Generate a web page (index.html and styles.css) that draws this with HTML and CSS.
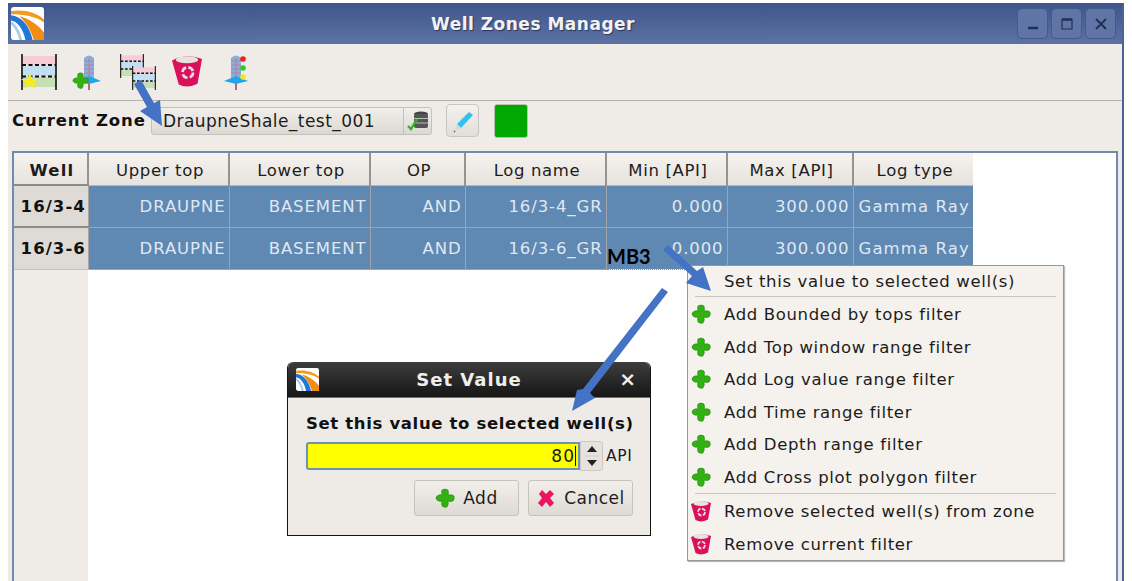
FILE: index.html
```html
<!DOCTYPE html>
<html lang="en">
	<head>
		<meta charset="UTF-8">
		<title>Well Zones Manager</title>
		<link rel="stylesheet" href="styles.css">
	</head>
	<body>
		<svg class="defs" width="0" height="0">
			<symbol id="logo" viewBox="0 0 32 32">
				<rect width="32" height="32" rx="3" fill="#fff"/>
				<path d="M0 4 C12 2 24 5 32 12 V15 C24 9 12 7 0 7Z" fill="#f59a1c"/>
				<path d="M8 9 C18 11 28 19 32 25 V32 H22 C20 24 15 15 8 9Z" fill="#f28c12"/>
				<path d="M0 8 C10 9 18 18 21 32 H14 C12 22 7 14 0 13Z" fill="#1f78d8"/>
				<path d="M0 14 C5 16 9 24 11 32 H8 C6 24 3 19 0 17Z" fill="#a8cdf0"/>
			</symbol>
			<symbol id="plus" viewBox="0 0 20 20">
				<path d="M7 2 Q10 0 13 2 Q14 5 13 7 Q17 6 19 8 Q20 11 18 13 Q15 14 13 13 Q14 16 12 19 Q9 20 7 18 Q6 15 7 13 Q4 14 2 12 Q0 10 2 8 Q5 6 7 7 Q6 4 7 2Z" fill="#33b014" stroke="#1f8a0c" stroke-width=".6"/>
			</symbol>
			<symbol id="bin" viewBox="0 0 20 22">
				<path d="M0 4 Q10 -1 20 3 L17 19.500 Q10 23 4.500 20Z" fill="#d9105a"/>
				<ellipse cx="10" cy="3.500" rx="7.500" ry="2.400" fill="#e6e2dc"/>
				<circle cx="10.500" cy="12" r="3.500" fill="none" stroke="#fbd6e4" stroke-width="1.800" stroke-dasharray="4 1.500"/>
			</symbol>
			<symbol id="tower" viewBox="0 0 28 36">
				<path d="M14 4 V36" stroke="#b9677f" stroke-width="2"/>
				<path d="M9 4 Q14 -1 19 4 V24 H9Z" fill="#7fb3dd"/>
				<path d="M9 7 H19 M9 11 H19 M9 15 H19 M9 19 H19 M14 4 V24" stroke="#c87a9c" stroke-width="1.200"/>
				<path d="M2 27 L14 22 L26 27 L14 30Z" fill="#22a5ea"/>
			</symbol>
			<symbol id="zones" viewBox="0 0 36 36">
				<rect x="1" y="2" width="34" height="9" fill="#f6cdd7"/>
				<rect x="1" y="12" width="34" height="10" fill="#c4dff2"/>
				<rect x="1" y="23" width="34" height="10" fill="#c4e0b4"/>
				<path d="M1 0 V36 M35 0 V36" stroke="#111" stroke-width="1.600"/>
				<path d="M1 11 H35 M1 22.500 H35" stroke="#111" stroke-width="2.200" stroke-dasharray="4 2.500"/>
			</symbol>
		</svg>

		<div class="window">
			<div class="titlebar">
				<svg class="title-logo"><use href="#logo"/></svg>
				<span class="title-text">Well Zones Manager</span>
				<div class="wm-buttons">
					<div class="wm-btn"><svg width="16" height="16" viewBox="0 0 16 16"><path d="M3 12 H13" stroke="#1f2f55" stroke-width="2.500"/></svg></div>
					<div class="wm-btn"><svg width="16" height="16" viewBox="0 0 16 16"><path d="M3 3.500 H13 V13 H3Z" fill="none" stroke="#1f2f55" stroke-width="1.200"/><path d="M3 3.500 H13" stroke="#1f2f55" stroke-width="2.500"/></svg></div>
					<div class="wm-btn"><svg width="16" height="16" viewBox="0 0 16 16"><path d="M3 3 L13 13 M13 3 L3 13" stroke="#1f2f55" stroke-width="1.800"/></svg></div>
				</div>
			</div>

			<div class="toolbar">
				<svg class="tool tool-zones" viewBox="0 0 36 36">
					<use href="#zones"/>
					<path d="M9 19 L11.500 25 L18 25 L13 29 L15 35 L9 31.500 L3 35 L5 29 L0 25 L6.500 25Z" fill="#f9ec1e"/>
				</svg>
				<svg class="tool tool-tower" viewBox="0 0 30 36">
					<use href="#tower" x="3" width="28" height="36"/>
					<use href="#plus" y="18" width="17" height="17"/>
				</svg>
				<svg class="tool tool-copy" viewBox="0 0 36 36">
					<use href="#zones" width="24" height="24"/>
					<use href="#zones" x="12" y="12" width="24" height="24"/>
				</svg>
				<svg class="tool tool-bin"><use href="#bin"/></svg>
				<svg class="tool tool-lights" viewBox="0 0 28 36">
					<use href="#tower" width="28" height="36"/>
					<circle cx="21" cy="5" r="2.800" fill="#f02020"/>
					<circle cx="21" cy="14" r="2.800" fill="#2fc82f"/>
					<circle cx="21" cy="23" r="2.800" fill="#f2e52a"/>
				</svg>
			</div>

			<div class="zone-row">
				<span class="zone-label">Current Zone</span>
				<div class="combo">
					<span class="combo-text">DraupneShale_test_001</span>
					<div class="combo-btn">
						<svg width="24" height="24" viewBox="0 0 24 24">
							<ellipse cx="15" cy="5" rx="7" ry="2.500" fill="#444"/>
							<rect x="8" y="5" width="14" height="14" rx="2" fill="#555"/>
							<path d="M8 9.500 H22 M8 14 H22" stroke="#bbb" stroke-width="1"/>
							<path d="M2 17 L5 20 L11 10" fill="none" stroke="#32b51c" stroke-width="2.400"/>
						</svg>
					</div>
				</div>
				<button class="pen-btn">
					<svg width="24" height="24" viewBox="0 0 24 24">
						<path d="M6 15 L18 3 L22 6 L10 19Z" fill="#2cc3f3"/>
						<path d="M6 15 L10 19 L4 22Z" fill="#d8d8d8"/>
						<path d="M4 22 L3 23" stroke="#555" stroke-width="1.500"/>
					</svg>
				</button>
				<div class="swatch"></div>
			</div>

			<div class="table-frame">
				<div class="row-head-fill"></div>
				<table class="zones">
					<thead>
						<tr>
							<th class="well-col">Well</th>
							<th class="c-top">Upper top</th>
							<th class="c-top">Lower top</th>
							<th class="c-op">OP</th>
							<th class="c-top">Log name</th>
							<th class="c-min">Min [API]</th>
							<th class="c-max">Max [API]</th>
							<th class="c-type">Log type</th>
						</tr>
					</thead>
					<tbody>
						<tr>
							<th class="well-col">16/3-4</th>
							<td>DRAUPNE</td>
							<td>BASEMENT</td>
							<td>AND</td>
							<td>16/3-4_GR</td>
							<td>0.000</td>
							<td>300.000</td>
							<td class="left">Gamma Ray</td>
						</tr>
						<tr>
							<th class="well-col">16/3-6</th>
							<td>DRAUPNE</td>
							<td>BASEMENT</td>
							<td>AND</td>
							<td>16/3-6_GR</td>
							<td class="current">0.000</td>
							<td>300.000</td>
							<td class="left">Gamma Ray</td>
						</tr>
					</tbody>
				</table>
			</div>
		</div>

		<div class="menu">
			<div class="menu-item menu-head">Set this value to selected well(s)</div>
			<div class="menu-sep"></div>
			<div class="menu-item"><svg class="menu-icon"><use href="#plus"/></svg>Add Bounded by tops filter</div>
			<div class="menu-item"><svg class="menu-icon"><use href="#plus"/></svg>Add Top window range filter</div>
			<div class="menu-item"><svg class="menu-icon"><use href="#plus"/></svg>Add Log value range filter</div>
			<div class="menu-item"><svg class="menu-icon"><use href="#plus"/></svg>Add Time range filter</div>
			<div class="menu-item"><svg class="menu-icon"><use href="#plus"/></svg>Add Depth range filter</div>
			<div class="menu-item"><svg class="menu-icon"><use href="#plus"/></svg>Add Cross plot polygon filter</div>
			<div class="menu-sep"></div>
			<div class="menu-item"><svg class="menu-icon"><use href="#bin"/></svg>Remove selected well(s) from zone</div>
			<div class="menu-item"><svg class="menu-icon"><use href="#bin"/></svg>Remove current filter</div>
		</div>

		<div class="dialog">
			<div class="dialog-title">
				<svg class="dialog-logo"><use href="#logo"/></svg>
				<span class="dialog-name">Set Value</span>
				<span class="dialog-close">×</span>
			</div>
			<div class="dialog-body">
				<div class="dialog-label">Set this value to selected well(s)</div>
				<div class="value-row">
					<div class="value-input"><span>80</span><i class="caret"></i></div>
					<div class="spin">
						<svg width="20" height="30" viewBox="0 0 20 30">
							<path d="M5 11 L10 5 L15 11Z M5 19 L10 25 L15 19Z" fill="#222"/>
							<path d="M3 15 H17" stroke="#d2cec9"/>
						</svg>
					</div>
					<span class="unit">API</span>
				</div>
				<div class="dialog-buttons">
					<button class="btn btn-add"><svg width="20" height="20"><use href="#plus"/></svg>Add</button>
					<button class="btn btn-cancel">
						<svg width="20" height="20" viewBox="0 0 20 20"><path d="M3 6 L6 2 L10 6 L14 2 L18 6 L14 10 L18 15 L14 19 L10 14 L6 19 L2 15 L6 10Z" fill="#ee1560"/></svg>Cancel
					</button>
				</div>
			</div>
		</div>

		<span class="mb3">MB3</span>

		<svg class="arrows" width="1132" height="581" viewBox="0 0 1132 581">
			<g fill="#4472c4">
				<path d="M134 84 L141 80 L154 103 L160 100 L162 126 L140 111 L147 107Z"/>
				<path d="M663 250 L668 245 L697 271 L703 267 L711 291 L686 283 L692 276Z"/>
				<path d="M662 288 L668 292 L590 393 L595 398 L572 411 L577 390 L583 389Z"/>
			</g>
		</svg>
	</body>
</html>
```

FILE: styles.css
```css
* {
	box-sizing: border-box;
	margin: 0;
	padding: 0;
}

body {
	position: relative;
	width: 1132px;
	height: 581px;
	overflow: hidden;
	background-color: #fff;
	font-family: "DejaVu Sans", sans-serif;
	color: #1c1c1c;
}

.defs {
	position: absolute;
}

.window {
	display: flex;
	flex-direction: column;
	width: 1116px;
	height: 578px;
	margin: 3px 0 0 8px;
	background-color: #efebe7;
	border-right: 2px solid #4c6491;
}

/* title bar */
.titlebar {
	position: relative;
	display: flex;
	align-items: center;
	justify-content: center;
	flex-shrink: 0;
	height: 41px;
	padding-right: 64px;
	background: linear-gradient(#3f568c, #5c72a3);
}

.title-logo {
	position: absolute;
	left: 3px;
	top: 4px;
	width: 33px;
	height: 33px;
}

.title-text {
	font-size: 17px;
	font-weight: bold;
	letter-spacing: 0.5px;
	color: #f2f2f2;
	text-shadow: 1px 1px 1px #2a3a60;
}

.wm-buttons {
	position: absolute;
	right: 6px;
	top: 5px;
	display: flex;
	gap: 3px;
}

.wm-btn {
	display: flex;
	align-items: center;
	justify-content: center;
	width: 31px;
	height: 31px;
	background-color: #6075a6;
	border: 1px solid #44598c;
	border-radius: 5px;
}

/* toolbar */
.toolbar {
	display: flex;
	align-items: flex-start;
	flex-shrink: 0;
	height: 57px;
	padding: 10px 0 0 13px;
	border-bottom: 1px solid #b5b1ab;
}

.tool {
	flex-shrink: 0;
}

.tool-zones {
	width: 36px;
	height: 36px;
	margin-right: 15px;
}

.tool-tower {
	width: 30px;
	height: 36px;
	margin-right: 18px;
}

.tool-copy {
	width: 36px;
	height: 36px;
	margin-right: 16px;
}

.tool-bin {
	width: 30px;
	height: 34px;
	margin-right: 20px;
}

.tool-lights {
	width: 28px;
	height: 36px;
}

/* current zone */
.zone-row {
	display: flex;
	align-items: center;
	flex-shrink: 0;
	height: 39px;
	padding-left: 4px;
}

.zone-label {
	width: 139px;
	font-size: 16.500px;
	font-weight: bold;
	letter-spacing: 0.9px;
	color: #111;
}

.combo {
	display: flex;
	align-items: center;
	width: 281px;
	height: 28px;
	background: linear-gradient(#f2efeb, #dcd8d3);
	border: 1px solid #c4c0ba;
	border-radius: 3px;
}

.combo-text {
	flex: 1;
	padding-left: 11px;
	font-size: 17px;
	letter-spacing: 0.45px;
	white-space: nowrap;
}

.combo-btn {
	display: flex;
	align-items: center;
	justify-content: center;
	width: 28px;
	height: 100%;
	border-left: 1px solid #c4c0ba;
}

.pen-btn {
	display: flex;
	align-items: center;
	justify-content: center;
	width: 33px;
	height: 33px;
	margin-left: 14px;
	background: linear-gradient(#f4f1ee, #e2ded9);
	border: 1px solid #c9c5bf;
	border-radius: 4px;
}

.swatch {
	width: 34px;
	height: 34px;
	margin-left: 15px;
	background-color: #00a800;
	border: 1px solid #b6c4ae;
	border-radius: 3px;
}

/* table */
.table-frame {
	position: relative;
	flex: 1;
	margin: 11px 4px 0 4px;
	background-color: #fff;
	border: 2px solid #6d8cb0;
	border-bottom: 0;
	overflow: hidden;
}

.row-head-fill {
	position: absolute;
	left: 0;
	top: 0;
	bottom: 0;
	width: 74px;
	background-color: #efebe7;
}

.zones {
	position: relative;
	border-collapse: collapse;
	table-layout: fixed;
	width: 959px;
	font-size: 16.500px;
}

.zones thead th {
	height: 32px;
	padding: 3px 0 0 3px;
	font-weight: normal;
	letter-spacing: 0.65px;
	background: linear-gradient(#f6f3f0, #e6e2dd);
	border-right: 2px solid #96928d;
	border-bottom: 1px solid #b9b5b0;
}

.zones thead th.c-type {
	border-right: 0;
}

.zones thead th.well-col {
	font-weight: bold;
	letter-spacing: 1.2px;
}

.well-col {
	width: 74px;
}

.c-top {
	width: 141px;
}

.c-op {
	width: 95px;
}

.c-min {
	width: 121px;
}

.c-max {
	width: 126px;
}

.c-type {
	width: 120px;
}

.zones tbody th {
	height: 42px;
	padding-left: 5px;
	font-size: 16.500px;
	letter-spacing: 1.1px;
	color: #111;
	background-color: #dedad6;
	border-top: 2px solid #8e8a86;
	border-bottom: 1px solid #c4c0bb;
	border-right: 1px solid #a8a4a0;
	white-space: nowrap;
}

.zones td {
	padding-right: 3px;
	text-align: right;
	letter-spacing: 0.9px;
	color: #dfe8f1;
	background-color: #5f89b3;
	border: 1px solid #a0a4a8;
	border-top: 0;
	white-space: nowrap;
	overflow: hidden;
}

.zones td.left {
	padding-left: 5px;
	text-align: left;
	letter-spacing: 1.1px;
	border-right: 0;
}

.zones td.current {
	border: 1px dotted #b08a5a;
}

/* context menu */
.menu {
	position: absolute;
	left: 687px;
	top: 265px;
	width: 377px;
	height: 296px;
	padding-top: 1px;
	background-color: #f5f1ed;
	border: 1px solid #9a9894;
	box-shadow: 1px 1px 1px #bbb;
}

.menu-item {
	position: relative;
	height: 32.500px;
	padding-left: 36px;
	font-size: 16.500px;
	letter-spacing: 0.65px;
	line-height: 33px;
	white-space: nowrap;
}

.menu-head {
	height: 29px;
	line-height: 29px;
}

.menu-sep {
	height: 1px;
	margin: 0 7px 1px;
	background-color: #c9c5c0;
}

.menu-icon {
	position: absolute;
	left: 3px;
	top: 5px;
	width: 20px;
	height: 22px;
}

/* set value dialog */
.dialog {
	position: absolute;
	left: 287px;
	top: 362px;
	display: flex;
	flex-direction: column;
	width: 364px;
	height: 174px;
	border: 1px solid #141414;
	border-top: 0;
	border-radius: 6px 6px 0 0;
	background-color: #eeeae6;
}

.dialog-title {
	position: relative;
	display: flex;
	align-items: center;
	justify-content: center;
	flex-shrink: 0;
	height: 36px;
	background: linear-gradient(#3d3d3d, #161616);
	border-radius: 6px 6px 0 0;
	border-bottom: 1px solid #54759f;
}

.dialog-logo {
	position: absolute;
	left: 8px;
	top: 6px;
	width: 23px;
	height: 23px;
}

.dialog-name {
	font-size: 18px;
	font-weight: bold;
	letter-spacing: 1px;
	color: #eee;
}

.dialog-close {
	position: absolute;
	right: 14px;
	top: 5px;
	font-size: 20px;
	font-weight: bold;
	color: #eee;
}

.dialog-body {
	flex: 1;
	padding: 16px 17px 0 18px;
}

.dialog-label {
	font-size: 16.500px;
	font-weight: bold;
	letter-spacing: 0.65px;
	white-space: nowrap;
	color: #111;
}

.value-row {
	display: flex;
	align-items: center;
	margin-top: 8px;
}

.value-input {
	display: flex;
	align-items: center;
	justify-content: flex-end;
	width: 274px;
	height: 28px;
	padding-right: 2px;
	font-size: 17px;
	letter-spacing: 1px;
	background-color: #ff0;
	border: 2px solid #6f93b6;
	border-radius: 3px 0 0 3px;
}

.caret {
	width: 1px;
	height: 20px;
	background-color: #111;
}

.spin {
	display: flex;
	align-items: center;
	justify-content: center;
	width: 23px;
	height: 30px;
	background-color: #e6e2dd;
	border: 1px solid #cbc7c1;
	border-radius: 0 3px 3px 0;
}

.unit {
	margin-left: 3px;
	font-size: 15.500px;
	letter-spacing: 0.7px;
}

.dialog-buttons {
	display: flex;
	justify-content: flex-end;
	gap: 9px;
	margin-top: 9px;
}

.btn {
	display: flex;
	align-items: center;
	justify-content: center;
	gap: 8px;
	height: 36px;
	font-family: inherit;
	font-size: 17px;
	letter-spacing: 0.5px;
	color: #1c1c1c;
	background: linear-gradient(#f2efeb, #dedad5);
	border: 1px solid #c6c2bc;
	border-radius: 3px;
}

.btn-add {
	width: 105px;
}

.btn-cancel {
	width: 105px;
}

/* annotations */
.mb3 {
	position: absolute;
	left: 607px;
	top: 244px;
	font-family: "Lato", sans-serif;
	font-size: 20px;
	font-weight: bold;
	color: #000;
}

.arrows {
	position: absolute;
	left: 0;
	top: 0;
}
```
